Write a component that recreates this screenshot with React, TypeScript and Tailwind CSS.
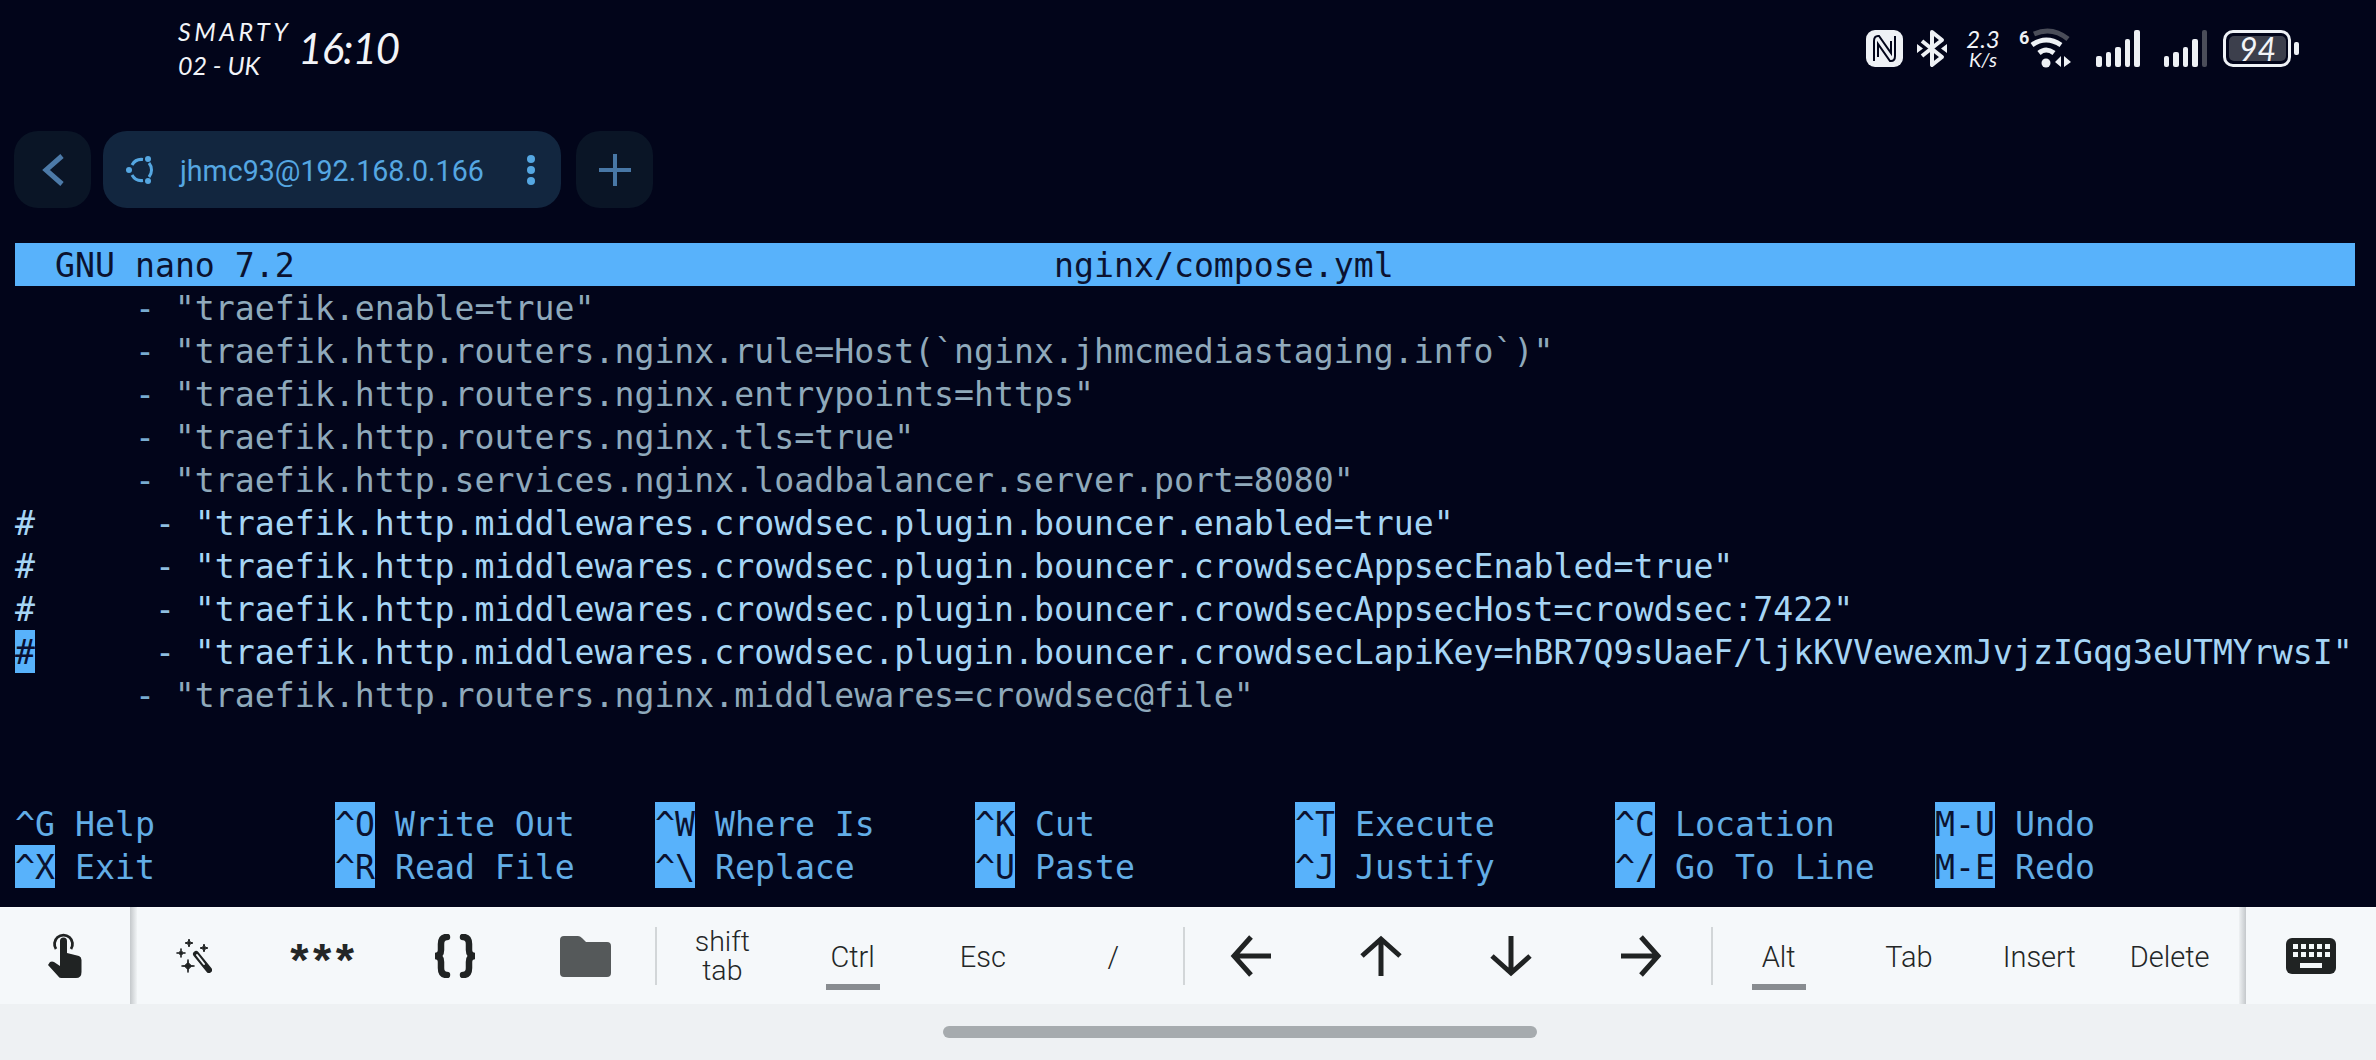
import { ReactNode } from "react"

const mono = "font-['DejaVu_Sans_Mono',monospace] text-[33.2px] leading-[45px] whitespace-pre"

type Line = { text: string; commented?: boolean; cursor?: boolean }

const lines: Line[] = [
  { text: '"traefik.enable=true"' },
  { text: '"traefik.http.routers.nginx.rule=Host(`nginx.jhmcmediastaging.info`)"' },
  { text: '"traefik.http.routers.nginx.entrypoints=https"' },
  { text: '"traefik.http.routers.nginx.tls=true"' },
  { text: '"traefik.http.services.nginx.loadbalancer.server.port=8080"' },
  { text: '"traefik.http.middlewares.crowdsec.plugin.bouncer.enabled=true"', commented: true },
  { text: '"traefik.http.middlewares.crowdsec.plugin.bouncer.crowdsecAppsecEnabled=true"', commented: true },
  { text: '"traefik.http.middlewares.crowdsec.plugin.bouncer.crowdsecAppsecHost=crowdsec:7422"', commented: true },
  { text: '"traefik.http.middlewares.crowdsec.plugin.bouncer.crowdsecLapiKey=hBR7Q9sUaeF/ljkKVVewexmJvjzIGqg3eUTMYrwsI"', commented: true, cursor: true },
  { text: '"traefik.http.routers.nginx.middlewares=crowdsec@file"' },
]

const shortcuts = [
  [["^G", "Help"], ["^O", "Write Out"], ["^W", "Where Is"], ["^K", "Cut"], ["^T", "Execute"], ["^C", "Location"], ["M-U", "Undo"]],
  [["^X", "Exit"], ["^R", "Read File"], ["^\\", "Replace"], ["^U", "Paste"], ["^J", "Justify"], ["^/", "Go To Line"], ["M-E", "Redo"]],
]

function EditorLine({ line }: { line: Line }) {
  if (line.commented) {
    return (
      <div className="h-[43px] text-[#a6d5f5]">
        <span className={line.cursor ? "inline-block h-[43px] bg-[#58b2fb] text-[#0a1030]" : ""}>#</span>
        {"      "}
        <span className="text-[#8fbfdf]">-</span> {line.text}
      </div>
    )
  }
  return (
    <div className="h-[43px] text-[#8fa9bb]">
      {"      "}
      <span className="text-[#78acd0]">-</span> {line.text}
    </div>
  )
}

function Shortcut({ keys, label, plain }: { keys: string; label: string; plain?: boolean }) {
  return (
    <div className="w-[320px] text-[#62ade6]">
      <span className={plain ? "" : "inline-block h-[43px] bg-[#58b2fb] text-[#0b1230]"}>{keys}</span> {label}
    </div>
  )
}

function Bars({ dimLast }: { dimLast?: boolean }) {
  const heights = ["h-[11px]", "h-[15px]", "h-[20px]", "h-[28px]", "h-[37px]"]
  return (
    <div className="flex items-end gap-[4px]">
      {heights.map((h, i) => (
        <div key={h} className={`w-[5.5px] rounded-[2px] ${h} ${dimLast && i === 4 ? "bg-[#4a4d59]" : "bg-[#eef1f5]"}`} />
      ))}
    </div>
  )
}

function StatusBar() {
  return (
    <div className="h-[131px] shrink-0 flex justify-between pl-[178px] pr-[77px] text-[#f2f4f8] italic font-['Lato',sans-serif]">
      <div className="flex gap-[7px] h-[80px] pt-[14px]">
        <div className="flex flex-col text-[25px] leading-[34px]">
          <span className="tracking-[3.5px]">SMARTY</span>
          <span>02 - UK</span>
        </div>
        <div className="text-[42px] leading-[40px] pt-[14px] tracking-[-1px]">16:10</div>
      </div>
      <div className="flex items-start pt-[28px] h-[70px]">
        <svg width="37" height="39" viewBox="0 0 37 39" className="mt-[2px]">
          <rect x="0" y="0" width="37" height="37" rx="9" fill="#eef1f5" />
          <path d="M8 31V11Q8 6 12 6H13L25 23V11M29 6V26Q29 31 25 31H24L12 14V27" fill="none" stroke="#02051a" strokeWidth="2" />
        </svg>
        <svg width="30" height="39" viewBox="0 0 30 39" className="ml-[14px] mt-[2px]">
          <path d="M5 11L25 27L15 35V2L25 10L5 26" fill="none" stroke="#eef1f5" strokeWidth="4" strokeLinejoin="round" />
          <path d="M0 14L6 18.5L0 23ZM30 14L24 18.5L30 23Z" fill="#eef1f5" />
        </svg>
        <div className="ml-[18px] w-[36px] flex flex-col items-center text-[24px] leading-[21px]">
          <span>2.3</span>
          <span className="text-[20px]">K/s</span>
        </div>
        <svg width="54" height="40" viewBox="0 0 54 40" className="ml-[18px] overflow-visible">
          <text x="0" y="16" fontSize="18" fontWeight="700" fontStyle="normal" fill="#eef1f5" fontFamily="Roboto, sans-serif">6</text>
          <path d="M15 6Q33 -2 49 11" fill="none" stroke="#4a4d59" strokeWidth="5" />
          <path d="M13 17Q27 7 42 17" fill="none" stroke="#eef1f5" strokeWidth="5" />
          <path d="M20 25Q27 19 35 25" fill="none" stroke="#eef1f5" strokeWidth="5" />
          <circle cx="27" cy="35" r="4.5" fill="#eef1f5" />
          <path d="M42 28V39L36 34ZM45 28L52 34L45 39Z" fill="#eef1f5" />
        </svg>
        <div className="ml-[23px] mt-[2px]"><Bars /></div>
        <div className="ml-[24px] mt-[2px]"><Bars dimLast /></div>
        <div className="ml-[16px] mt-[2px] flex items-center gap-[3px]">
          <div className="w-[68px] h-[37px] border-[3px] border-[#eef1f5] rounded-[10px] p-[3px]">
            <div className="h-full w-[57px] bg-[#3c3f4c] rounded-[5px] flex items-center justify-center text-[32px] leading-none">94</div>
          </div>
          <div className="w-[5px] h-[13px] rounded-[2px] bg-[#eef1f5]" />
        </div>
      </div>
    </div>
  )
}

function TabBar() {
  return (
    <div className="h-[112px] shrink-0 pl-[14px] flex items-start gap-[12px] font-['Roboto',sans-serif]">
      <div className="w-[77px] h-[77px] rounded-[24px] bg-[#0a1526] flex items-center justify-center">
        <svg width="24" height="34" viewBox="0 0 24 34">
          <path d="M21 3L5 17L21 31" fill="none" stroke="#4c7aa8" strokeWidth="5" />
        </svg>
      </div>
      <div className="w-[458px] h-[77px] rounded-[24px] bg-[#12263f] flex items-center pl-[23px] pr-[26px] text-[#55a7e2] text-[28.6px]">
        <svg width="30" height="30" viewBox="0 0 30 30" className="shrink-0">
          <path d="M6 10A11 11 0 0 1 17 4.5M23 8A11 11 0 0 1 23 22M17 25.5A11 11 0 0 1 6 20" fill="none" stroke="#55a7e2" strokeWidth="3" />
          <circle cx="3" cy="15" r="3" fill="#55a7e2" />
          <circle cx="22" cy="4" r="3" fill="#55a7e2" />
          <circle cx="22" cy="26" r="3" fill="#55a7e2" />
        </svg>
        <span className="ml-[24px] flex-1 pt-[3px]">jhmc93@192.168.0.166</span>
        <div className="flex flex-col gap-[3px]">
          <div className="w-[8px] h-[8px] rounded-full bg-[#55a7e2]" />
          <div className="w-[8px] h-[8px] rounded-full bg-[#55a7e2]" />
          <div className="w-[8px] h-[8px] rounded-full bg-[#55a7e2]" />
        </div>
      </div>
      <div className="w-[77px] h-[77px] ml-[3px] rounded-[24px] bg-[#0a1526] flex items-center justify-center">
        <svg width="32" height="32" viewBox="0 0 32 32">
          <path d="M16 0V32M0 16H32" stroke="#4877a6" strokeWidth="4" />
        </svg>
      </div>
    </div>
  )
}

function Star({ x, y, r }: { x: number; y: number; r: number }) {
  return <path d={`M${x} ${y - r}Q${x} ${y} ${x + r} ${y}Q${x} ${y} ${x} ${y + r}Q${x} ${y} ${x - r} ${y}Q${x} ${y} ${x} ${y - r}Z`} fill="#202323" stroke="#202323" strokeWidth="1" />
}

function Key({ children, underline }: { children: ReactNode; underline?: boolean }) {
  return (
    <div className="w-[130.3px] shrink-0 h-full flex flex-col items-center pt-[33px] text-[29px] leading-[32px] text-[#232626] font-light">
      <span>{children}</span>
      {underline && <div className="mt-[11px] w-[54px] h-[6px] bg-[#888c90]" />}
    </div>
  )
}

function IconKey({ children }: { children: ReactNode }) {
  return <div className="w-[130.3px] shrink-0 h-full flex items-center justify-center">{children}</div>
}

function Arrow({ rotate }: { rotate: string }) {
  return (
    <svg width="42" height="42" viewBox="0 0 42 42" className={rotate}>
      <path d="M21 2L4 21L21 40M4 21H41" fill="none" stroke="#202323" strokeWidth="5" />
    </svg>
  )
}

function Divider() {
  return <div className="shrink-0 w-[2px] h-[58px] ml-[4.5px] mr-[0.5px] mt-[19px] bg-[#d2d6d8]" />
}

function Toolbar() {
  return (
    <div className="h-[97px] shrink-0 flex bg-[#f5f8fa] border-t border-t-[#fbfcfd] font-['Roboto',sans-serif]">
      <div className="w-[130px] shrink-0 flex items-center justify-center pb-[2px]">
        <svg width="34" height="46" viewBox="0 0 34 46">
          <path d="M8 17A9 9 0 1 1 23 17" fill="none" stroke="#202323" strokeWidth="2.8" />
          <path d="M12 9A3.5 3.5 0 0 1 19 9V21L31 24Q33.5 25 33.5 28V40Q33.5 46 28 46H13Q11 46 10 44L0 33L2 30Q4 29 6 30L12 34Z" fill="#202323" />
        </svg>
      </div>
      <div className="relative flex-1 flex">
        <div className="absolute left-0 top-[-1px] bottom-0 w-[7px] bg-gradient-to-r from-[#c4c8cb] to-[#f0f3f5]" />
        <div className="absolute right-0 top-[-1px] bottom-0 w-[7px] bg-gradient-to-r from-[#eef1f3] to-[#c4c8cb]" />
        <div className="flex -ml-[1px]">
          <IconKey>
            <svg width="36" height="34" viewBox="0 0 36 34">
              <Star x={13} y={4} r={4} />
              <Star x={28} y={9} r={4} />
              <Star x={5} y={14} r={4.5} />
              <Star x={12} y={27} r={6.5} />
              <path d="M20 15L33 31" stroke="#202323" strokeWidth="6" strokeLinecap="round" />
              <path d="M21 16L28 25" stroke="#f5f8fa" strokeWidth="2" strokeLinecap="round" />
            </svg>
          </IconKey>
          <IconKey>
            <span className="font-['Liberation_Sans',sans-serif] font-bold text-[47px] leading-[47px] tracking-[4.5px] text-[#232626] translate-y-[3px]">***</span>
          </IconKey>
          <IconKey>
            <svg width="46" height="44" viewBox="0 0 46 44">
              <path d="M15 3Q9 3 9 10V16Q9 22 3 22Q9 22 9 28V34Q9 41 15 41" fill="none" stroke="#202323" strokeWidth="6.5" strokeLinecap="round" />
              <path d="M31 3Q37 3 37 10V16Q37 22 43 22Q37 22 37 28V34Q37 41 31 41" fill="none" stroke="#202323" strokeWidth="6.5" strokeLinecap="round" />
            </svg>
          </IconKey>
          <IconKey>
            <svg width="51" height="41" viewBox="0 0 51 41">
              <path d="M4 0H18Q20 0 22 2L26 6H47Q51 6 51 10V37Q51 41 47 41H4Q0 41 0 37V4Q0 0 4 0Z" fill="#55595a" />
            </svg>
          </IconKey>
          <Divider />
          <div className="w-[130.3px] shrink-0 h-full flex flex-col items-center justify-center text-[28.5px] leading-[29px] text-[#232626] font-light">
            <span>shift</span>
            <span>tab</span>
          </div>
          <Key underline>Ctrl</Key>
          <Key>Esc</Key>
          <Key>/</Key>
          <Divider />
          <IconKey><Arrow rotate="" /></IconKey>
          <IconKey><Arrow rotate="rotate-90" /></IconKey>
          <IconKey><Arrow rotate="-rotate-90" /></IconKey>
          <IconKey><Arrow rotate="rotate-180" /></IconKey>
          <Divider />
          <Key underline>Alt</Key>
          <Key>Tab</Key>
          <Key>Insert</Key>
          <Key>Delete</Key>
        </div>
      </div>
      <div className="w-[130px] shrink-0 flex items-center justify-center">
        <svg width="50" height="36" viewBox="0 0 50 36">
          <rect width="50" height="36" rx="6" fill="#202323" />
          <path d="M7 6h5v5H7zM15 6h5v5h-5zM23 6h5v5h-5zM31 6h5v5h-5zM39 6h5v5h-5zM7 14h5v5H7zM15 14h5v5h-5zM23 14h5v5h-5zM31 14h5v5h-5zM39 14h5v5h-5zM14 25h22v5H14z" fill="#f5f8fa" />
        </svg>
      </div>
    </div>
  )
}

export default function App() {
  return (
    <div className="w-[2376px] h-[1060px] overflow-hidden flex flex-col bg-[#02051a]">
      <StatusBar />
      <TabBar />
      <div className={`h-[664px] shrink-0 px-[15px] ${mono}`}>
        <div className="h-[43px] bg-[#58b2fb] text-[#0b1230] pl-[40px] w-[2340px]">
          {"GNU nano 7.2" + " ".repeat(38) + "nginx/compose.yml"}
        </div>
        {lines.map((line) => (
          <EditorLine key={line.text} line={line} />
        ))}
        <div className="h-[43px]" />
        <div className="h-[43px]" />
        {shortcuts.map((row, i) => (
          <div key={i} className="flex h-[43px]">
            {row.map(([keys, label]) => (
              <Shortcut key={keys} keys={keys} label={label} plain={keys === "^G"} />
            ))}
          </div>
        ))}
      </div>
      <Toolbar />
      <div className="flex-1 bg-[#eef1f3] flex items-center pl-[943px]">
        <div className="w-[594px] h-[12px] rounded-full bg-[#a6abae]" />
      </div>
    </div>
  )
}
